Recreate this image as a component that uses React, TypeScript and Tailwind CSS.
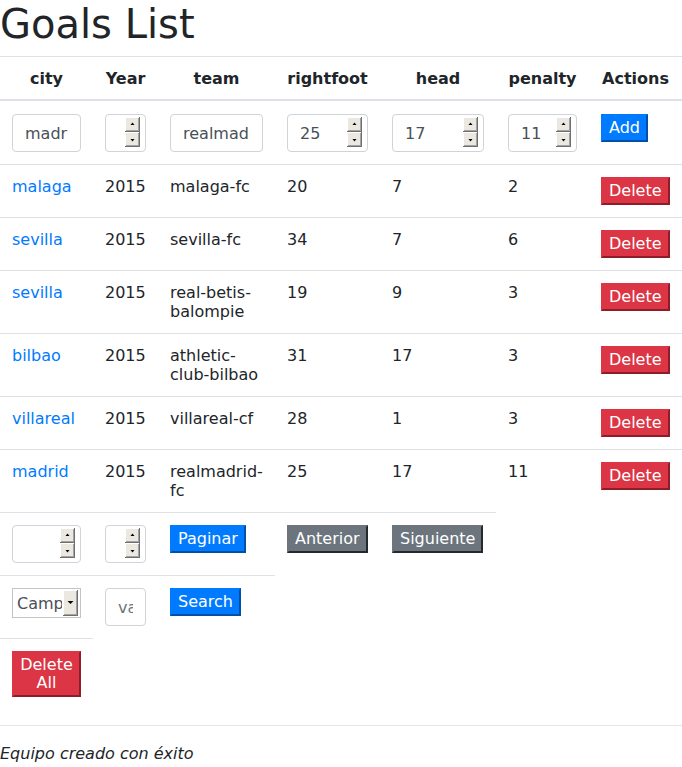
import React from 'react';

const goals = [
  { city: 'malaga', year: 2015, team: 'malaga-fc', rightfoot: 20, head: 7, penalty: 2 },
  { city: 'sevilla', year: 2015, team: 'sevilla-fc', rightfoot: 34, head: 7, penalty: 6 },
  { city: 'sevilla', year: 2015, team: 'real-betis-balompie', rightfoot: 19, head: 9, penalty: 3 },
  { city: 'bilbao', year: 2015, team: 'athletic-club-bilbao', rightfoot: 31, head: 17, penalty: 3 },
  { city: 'villareal', year: 2015, team: 'villareal-cf', rightfoot: 28, head: 1, penalty: 3 },
  { city: 'madrid', year: 2015, team: 'realmadrid-fc', rightfoot: 25, head: 17, penalty: 11 },
];

const btn = 'border-2 px-[6px] py-[3px] leading-[18px] text-white';
const blue = `${btn} bg-[#007bff] border-[#007bff] border-r-[#0050a8] border-b-[#0050a8]`;
const red = `${btn} bg-[#dc3545] border-[#dc3545] border-r-[#8e1c29] border-b-[#8e1c29]`;
const gray = `${btn} bg-[#6c757d] border-[#6c757d] border-r-[#25292d] border-b-[#25292d]`;
const field =
  'block w-full h-[38px] px-3 py-[6px] border border-[#ced4da] rounded bg-white text-[#495057] leading-6';

const th = 'px-3 pt-[13px] pb-[11px] leading-[18px] font-bold text-center align-bottom border-t border-b-2 border-[#dee2e6]';
const td = 'p-3 align-top border-t border-[#dee2e6]';
const first = 'px-3 pt-[13px] pb-3 align-top';

// beveled half of the old-style spin button
function Bevel({ y, up }: { y: number; up: boolean }) {
  return (
    <g transform={`translate(0 ${y})`}>
      <rect x="0" y="0" width="15" height="15" fill="#6f6f6f" />
      <rect x="0" y="0" width="14" height="14" fill="#ffffff" />
      <rect x="1" y="1" width="13" height="13" fill="#a3a3a3" />
      <rect x="1" y="1" width="12" height="12" fill="#ebe8e2" />
      {up ? (
        <path d="M7.5 5.5 L9.5 8 L5.5 8 Z" fill="#000" />
      ) : (
        <path d="M5.5 7 L9.5 7 L7.5 9.5 Z" fill="#000" />
      )}
    </g>
  );
}

function Spin() {
  return (
    <svg className="absolute right-[6px] top-[3px]" width="15" height="30" viewBox="0 0 15 30">
      <Bevel y={0} up />
      <Bevel y={15} up={false} />
    </svg>
  );
}

function NumberField({ value }: { value?: number }) {
  return (
    <div className="relative">
      <input className={`${field} pr-6`} defaultValue={value} />
      <Spin />
    </div>
  );
}

export default function App() {
  return (
    <div className="font-['DejaVu_Sans',sans-serif] text-[#212529] text-base leading-[normal]">
      <h1 className="text-[40px] leading-[48px] mb-2 font-medium">Goals List</h1>

      <table className="w-full table-fixed border-separate border-spacing-0">
        <colgroup>
          <col className="w-[93px]" />
          <col className="w-[65px]" />
          <col className="w-[117px]" />
          <col className="w-[105px]" />
          <col className="w-[116px]" />
          <col className="w-[93px]" />
          <col className="w-[93px]" />
        </colgroup>
        <thead>
          <tr>
            <th className={th}>city</th>
            <th className={th}>Year</th>
            <th className={th}>team</th>
            <th className={th}>rightfoot</th>
            <th className={th}>head</th>
            <th className={th}>penalty</th>
            <th className={th}>Actions</th>
          </tr>
        </thead>
        <tbody>
          <tr>
            <td className={first}>
              <input className={field} defaultValue="madrid" />
            </td>
            <td className={first}>
              <NumberField />
            </td>
            <td className={first}>
              <input className={field} defaultValue="realmadrid" />
            </td>
            <td className={first}>
              <NumberField value={25} />
            </td>
            <td className={first}>
              <NumberField value={17} />
            </td>
            <td className={first}>
              <NumberField value={11} />
            </td>
            <td className={first}>
              <button className={blue}>Add</button>
            </td>
          </tr>

          {goals.map((g, i) => (
            <tr key={i}>
              <td className={td}>
                <a href="#" className="text-[#007bff]">{g.city}</a>
              </td>
              <td className={td}>{g.year}</td>
              <td className={td}>{g.team}</td>
              <td className={td}>{g.rightfoot}</td>
              <td className={td}>{g.head}</td>
              <td className={td}>{g.penalty}</td>
              <td className={td}>
                <button className={red}>Delete</button>
              </td>
            </tr>
          ))}

          {/* paginación */}
          <tr>
            <td className={td}>
              <NumberField />
            </td>
            <td className={td}>
              <NumberField />
            </td>
            <td className={td}>
              <button className={blue}>Paginar</button>
            </td>
            <td className={td}>
              <button className={gray}>Anterior</button>
            </td>
            <td className={td}>
              <button className={gray}>Siguiente</button>
            </td>
          </tr>

          {/* búsqueda */}
          <tr>
            <td className={td}>
              <div className="relative">
                <select className="block w-full h-[30px] appearance-none pl-1 pr-[18px] border border-[#c4c4c4] bg-white text-[#495057]">
                  <option>Campo</option>
                </select>
                <svg className="absolute right-[3px] top-[2px]" width="15" height="26" viewBox="0 0 15 26">
                  <rect x="0" y="0" width="15" height="26" fill="#6f6f6f" />
                  <rect x="0" y="0" width="14" height="25" fill="#ffffff" />
                  <rect x="1" y="1" width="13" height="24" fill="#a3a3a3" />
                  <rect x="1" y="1" width="12" height="23" fill="#ebe8e2" />
                  <path d="M4.5 11 L10.5 11 L7.5 14 Z" fill="#000" />
                </svg>
              </div>
            </td>
            <td className={td}>
              <input className={`${field} placeholder:text-[#6c757d]`} placeholder="valor" />
            </td>
            <td className={td}>
              <button className={blue}>Search</button>
            </td>
          </tr>

          <tr>
            <td className={td}>
              <button className={red}>Delete All</button>
            </td>
          </tr>
        </tbody>
      </table>

      <hr className="mt-4 mb-4 border-t border-[#e5e5e5]" />
      <p className="italic leading-6">Equipo creado con éxito</p>
    </div>
  );
}
